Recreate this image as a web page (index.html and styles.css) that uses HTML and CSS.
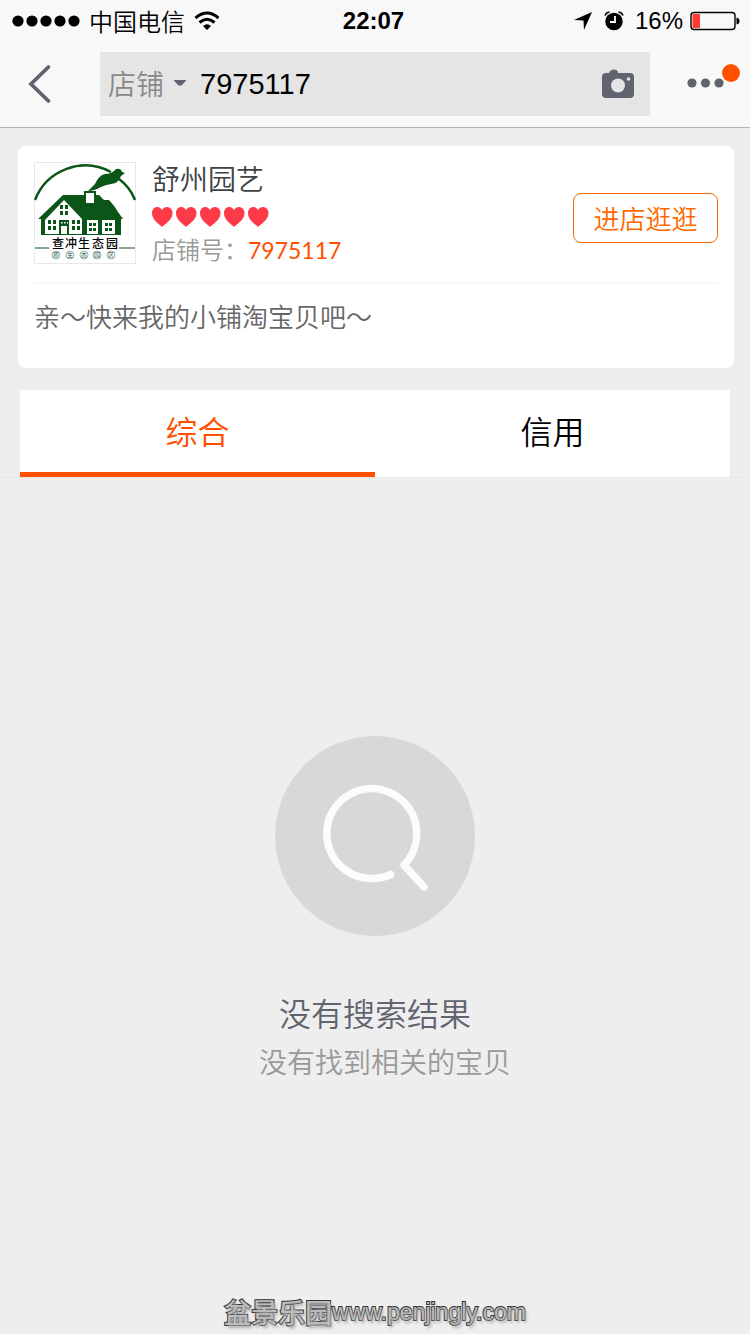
FILE: index.html
```
<!DOCTYPE html>
<html lang="zh-CN">
<head>
<meta charset="utf-8">
<meta name="viewport" content="width=device-width, initial-scale=1">
<title>店铺搜索</title>
<link rel="stylesheet" href="styles.css">
</head>
<body>
<header class="top">
  <div class="status">
    <div class="status-left">
      <svg class="signal" width="68" height="12" viewBox="0 0 68 12" aria-hidden="true"><circle cx="6" cy="6" r="5.6"/><circle cx="20" cy="6" r="5.6"/><circle cx="34" cy="6" r="5.6"/><circle cx="48" cy="6" r="5.6"/><circle cx="62" cy="6" r="5.6"/></svg>
      <span class="carrier">中国电信</span>
      <svg width="26" height="20" viewBox="0 0 26 20" aria-hidden="true"><g fill="none" stroke="#000" stroke-width="3"><path d="M1.500 7Q13-3 24.500 7"/><path d="M5.500 11.500Q13 5 20.500 11.500"/></g><path d="M9 15Q13 11.500 17 15L13 19Z"/></svg>
    </div>
    <time class="clock">22:07</time>
    <div class="status-right">
      <svg width="20" height="20" viewBox="0 0 20 20" aria-hidden="true"><path d="M19 1L11 19L10.500 9.500L1 9Z"/></svg>
      <svg class="alarm" width="20" height="20" viewBox="0 0 20 20" aria-hidden="true"><circle cx="10" cy="10.500" r="8.700"/><path d="M1 4.500Q2 1.500 5.500 1M14.500 1Q18 1.500 19 4.500" fill="none" stroke="#000" stroke-width="1.500"/><path d="M11 5V11H6" fill="none" stroke="#fff" stroke-width="1.800"/></svg>
      <span class="percent">16%</span>
      <svg width="50" height="20" viewBox="0 0 50 20" aria-hidden="true"><rect x="1" y="1.500" width="44" height="17" rx="3" fill="none" stroke="#000" stroke-width="1.400"/><rect x="2.500" y="3" width="7.500" height="14" rx="1" fill="#ff3b30"/><path d="M46.500 6.500Q49.500 7 49.500 10T46.500 13.500Z"/></svg>
    </div>
  </div>
  <div class="nav">
    <button class="back" aria-label="返回"><svg width="24" height="40" viewBox="0 0 24 40"><path d="M20.500 3L3 20L20.500 37" fill="none" stroke="#5f646e" stroke-width="3.800" stroke-linecap="round"/></svg></button>
    <form class="search">
      <button type="button" class="scope">店铺<svg width="14" height="8" viewBox="0 0 14 8" aria-hidden="true"><path d="M.5 1H13.500L9.500 5.500Q7 8 4.500 5.500Z" fill="#5f646e"/></svg></button>
      <input class="query" type="text" value="7975117" aria-label="搜索店铺">
      <button type="button" class="camera" aria-label="拍照"><svg width="32" height="29" viewBox="0 0 32 29"><path d="M4 4H7Q8 .5 12 .5T16 4H28Q32 4 32 8V25Q32 29 28 29H4Q0 29 0 25V8Q0 4 4 4Z" fill="#5f646e"/><circle cx="16" cy="16.500" r="7" fill="#e5e5e5"/><circle cx="26.500" cy="10" r="1.800" fill="#e5e5e5"/></svg></button>
    </form>
    <button class="more" aria-label="更多"><svg width="54" height="28" viewBox="0 0 54 28"><g fill="#5f646e"><circle cx="5" cy="19" r="4.600"/><circle cx="18.500" cy="19" r="4.600"/><circle cx="32" cy="19" r="4.600"/></g><circle cx="44" cy="9" r="10" fill="#fff"/><circle cx="44" cy="9" r="9" fill="#ff5000"/></svg></button>
  </div>
</header>
<main>
  <section class="card">
    <div class="shop">
      <svg class="logo" width="102" height="102" viewBox="0 0 102 102" role="img" aria-label="店铺标志">
        <rect x=".5" y=".5" width="101" height="101" fill="#fff" stroke="#e8e8e8"/>
        <g fill="none" stroke="#0c5518"><path d="M1 38A54 54 0 0 1 77 10M85 17Q96 25 101 38" stroke-width="2.500"/><path d="M1 86H15M85 86H101" stroke-width="1"/></g>
        <path d="M54 29Q57 26 61 22Q65 13 71 12Q78 12 82 7Q87 6 88 10L91 11L87 14Q85 21 77 22Q71 23 67 25Q60 29 54 29Z" fill="#0c5518"/>
        <path d="M4 57L29 33H50V29H62V33H65L70 38H75Q80 43 84 50L89 57H87V73H7V57Z" fill="#0c5518"/>
        <path d="M52 31H60V41H52ZM11 58L30 38L48 57V72H35V58H25V72H11ZM53 58H64V72H53ZM68 58H81V72H68Z" fill="#fff"/>
        <path d="M26 43h3v4h-3zm5 0h3v4h-3zm-5 6h3v4h-3zm5 0h3v4h-3zM14 58h3v4h-3zm5 0h3v4h-3zm-5 6h3v4h-3zm5 0h3v4h-3zM38 58h3v4h-3zm5 0h3v4h-3zm-5 6h3v4h-3zm5 0h3v4h-3zM55 61h3v3h-3zm4 0h3v3h-3zm-4 5h3v3h-3zm4 0h3v3h-3zM71 61h3v3h-3zm4 0h3v3h-3zm-4 5h3v3h-3zm4 0h3v3h-3z" fill="#0c5518"/>
        <path d="M27 60h1.500v1.500h-1.500zm3 0h1.500v1.500h-1.500zm3 0h1v1.500h-1zM27 64h6v8h-6z" fill="#fff"/>
        <g class="logo-name"><text x="24" y="86">查</text><text x="37" y="86">冲</text><text x="50" y="86">生</text><text x="64" y="86">态</text><text x="78" y="86">园</text></g>
        <g fill="#f2f8f5" stroke="#75a99a" stroke-width=".8"><circle cx="22" cy="93" r="4"/><circle cx="36" cy="93" r="4"/><circle cx="50" cy="93" r="4"/><circle cx="63" cy="93" r="4"/><circle cx="77" cy="93" r="4"/></g>
        <g class="logo-seal"><text x="22" y="95">原</text><text x="36" y="95">生</text><text x="50" y="95">态</text><text x="63" y="95">园</text><text x="77" y="95">区</text></g>
      </svg>
      <div class="info">
        <h1 class="name">舒州园艺</h1>
        <svg class="hearts" width="120" height="20" viewBox="0 0 120 20" role="img" aria-label="五心信用">
          <defs><path id="heart" d="M10 20C7 17 0 13 0 6C0-.5 7.500-2 10 3C12.500-2 20.500-.5 20.500 6C20.500 13 13 17 10 20Z"/></defs>
          <g fill="#fd3b48"><use href="#heart"/><use href="#heart" x="24"/><use href="#heart" x="48"/><use href="#heart" x="72"/><use href="#heart" x="96"/></g>
        </svg>
        <p class="number">店铺号：<span class="digits">7975117</span></p>
      </div>
      <button class="enter">进店逛逛</button>
    </div>
    <p class="intro">亲～快来我的小铺淘宝贝吧～</p>
  </section>
  <nav class="tabs">
    <button class="tab active">综合</button>
    <button class="tab">信用</button>
  </nav>
  <section class="empty">
    <svg width="200" height="200" viewBox="0 0 200 200" aria-hidden="true"><circle cx="100" cy="100" r="100" fill="#d7d8da"/><path d="M115.500 138.500A45 45 0 1 1 129 129L149 151" fill="none" stroke="#fcfcfc" stroke-width="7.500" stroke-linecap="round" stroke-linejoin="round"/></svg>
    <h2 class="empty-title">没有搜索结果</h2>
    <p class="empty-text">没有找到相关的宝贝</p>
  </section>
</main>
<footer class="mark"><span class="mark-name">盆景乐园</span><span class="mark-url">www.penjingly.com</span></footer>
</body>
</html>
```
FILE: styles.css
```
* { box-sizing: border-box; margin: 0; }
body {
  min-height: 100vh;
  display: flex;
  flex-direction: column;
  background: #eee;
  color: #000;
  font-family: "Noto Sans CJK SC", sans-serif;
  font-weight: 350;
}
button, input { font: inherit; color: inherit; border: 0; background: none; padding: 0; }
svg { display: block; flex: none; }
.top { background: #f8f8f8; border-bottom: 1px solid #b2b2b2; }
.status {
  display: grid;
  grid-template-columns: 1fr auto 1fr;
  align-items: center;
  height: 40px;
  padding: 0 10px 0 12px;
}
.status-left, .status-right { display: flex; align-items: center; }
.status-left { gap: 9px; }
.status-right { justify-content: flex-end; gap: 11px; }
.carrier { font-size: 24px; line-height: 38px; }
.clock { margin-right: 5px; font: bold 24px/42px "Liberation Sans", sans-serif; }
.percent { margin-right: -4px; font: 24px/42px "Liberation Sans", sans-serif; }
.nav { display: flex; align-items: center; height: 87px; padding: 0 9px 0 28px; }
.back { width: 72px; }
.search {
  flex: 1;
  display: flex;
  align-items: center;
  height: 64px;
  padding: 0 16px 0 8px;
  border-radius: 2px;
  background: #e5e5e5;
}
.scope { display: flex; align-items: center; gap: 9px; padding-bottom: 2px; font-size: 28px; line-height: 40px; color: #888; }
.query {
  flex: 1;
  min-width: 0;
  padding-left: 13px;
  font: 29px/40px "Liberation Sans", sans-serif;
}
.more { margin: -12px 0 0 37px; }
.card { margin: 18px 16px 22px 18px; padding: 16px; background: #fff; border-radius: 8px; }
.shop {
  display: flex;
  align-items: center;
  padding-bottom: 18px;
  border-bottom: 2px solid #f8f8f8;
}
.info { flex: 1; padding-left: 16px; }
.name { font-size: 28px; line-height: 32px; font-weight: 350; color: #3d4245; }
.hearts { margin: 13px 0 8px; }
.number { font-size: 24px; line-height: 28px; color: #999; }
.digits { font-family: Lato, sans-serif; font-size: 23px; font-weight: 400; color: #ff5000; }
.enter {
  width: 145px;
  height: 50px;
  margin-top: 10px;
  border: 1px solid #ff6a00;
  border-radius: 8px;
  font-size: 26px;
  line-height: 46px;
  color: #ff6a00;
}
.intro { padding: 13px 0 17px; font-size: 26px; line-height: 38px; color: #666; }
.tabs { display: flex; margin: 0 20px; background: #fff; }
.tab { flex: 1; height: 87px; padding-bottom: 2px; border-bottom: 5px solid #fff; font-size: 32px; line-height: 80px; }
.tab.active { border-color: #ff5000; color: #ff5000; }
.empty {
  display: flex;
  flex-direction: column;
  align-items: center;
  padding-top: 258px;
  border-top: 1px solid #e8e8e8;
}
.empty-title { margin-top: 52px; font-size: 32px; line-height: 48px; font-weight: 350; color: #5f646e; }
.empty-text { margin-top: 4px; font-size: 28px; line-height: 42px; color: #999; padding-left: 20px; }
.mark {
  display: flex;
  justify-content: center;
  align-items: center;
  margin-top: auto;
  line-height: 44px;
  color: #bbb;
  -webkit-text-stroke: 2px #333;
  paint-order: stroke fill;
  text-shadow: 2px 3px 3px #aaa;
}
.mark-name { font-size: 27px; font-weight: 500; }
.mark-url { font-family: "Liberation Sans", sans-serif; font-size: 23px; font-weight: 400; }
.logo-name { font-family: "Noto Sans CJK SC", sans-serif; font-size: 12px; font-weight: 500; text-anchor: middle; }
.logo-seal { font-family: "Noto Sans CJK SC", sans-serif; font-size: 6px; text-anchor: middle; fill: #344; }
```
